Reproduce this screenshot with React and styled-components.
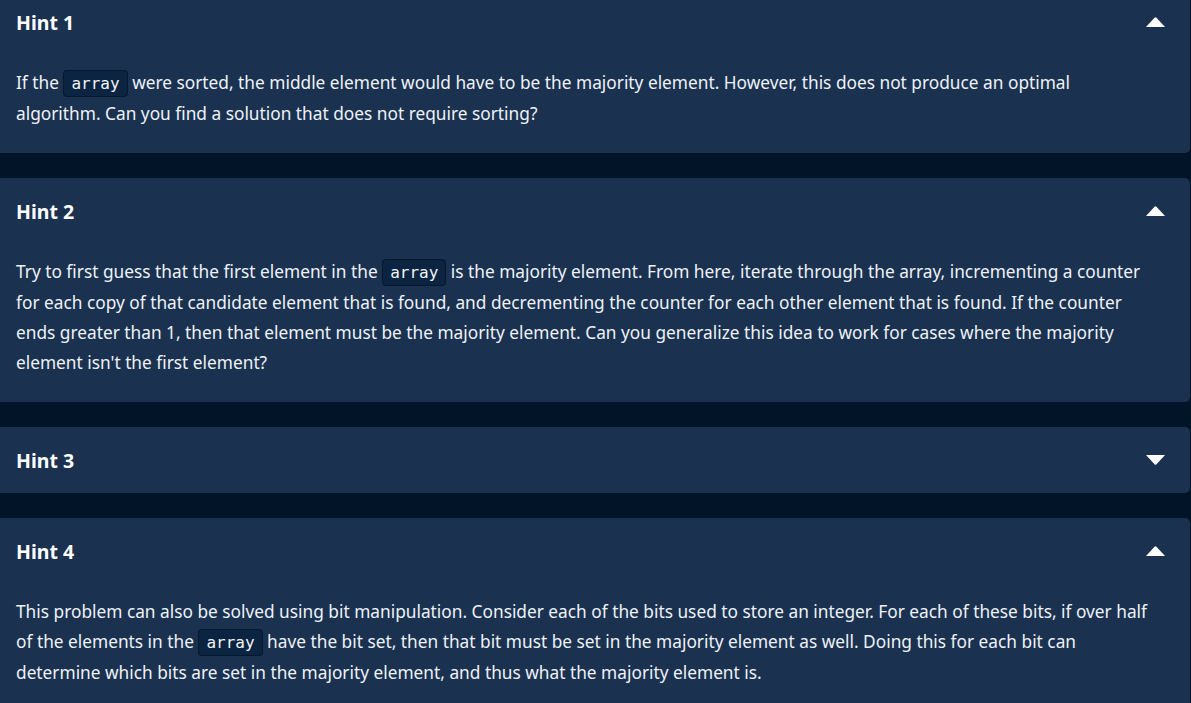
import React from "react";
import styled, { createGlobalStyle } from "styled-components";

const Global = createGlobalStyle`
  html, body { margin: 0; padding: 0; background: #011428; }
  body { font-family: "Noto Sans", "Open Sans", sans-serif; overflow: hidden; }
`;

const Page = styled.div`
  display: flex;
  flex-direction: column;
  gap: 25px;
  margin-top: -11px;
  width: 1190px;
`;

const Card = styled.section`
  background: #1a3150;
  border-radius: 0 5px 5px 0;
  color: #eef2f7;
`;

const Header = styled.div`
  height: 66px;
  display: flex;
  align-items: center;
  justify-content: space-between;
  padding: 0 25px 0 16px;
  box-sizing: border-box;
`;

const Title = styled.h3`
  margin: 0;
  font-size: 19.5px;
  font-weight: 700;
  color: #ffffff;
`;

const Chevron = styled.svg`
  width: 19px;
  height: 10px;
  display: block;
`;

const Body = styled.p`
  margin: 0;
  padding: 13px 36px 25px 16px;
  font-size: 17.3px;
  line-height: 29.7px;
  color: #eef2f7;
`;

const Code = styled.code`
  font-family: "DejaVu Sans Mono", "Liberation Mono", monospace;
  font-size: 16px;
  background: #0b2441;
  border: 1px solid #06182d;
  border-radius: 4px;
  padding: 3px 7px;
  margin: 0;
  color: #f2f5f9;
`;

const Arrow = ({ up }) => (
  <Chevron viewBox="0 0 19 10">
    {up ? (
      <path d="M0 10 L8.5 0.8 Q9.5 -0.2 10.5 0.8 L19 10 Z" fill="#fff" />
    ) : (
      <path d="M0 0 L19 0 L10.5 9.2 Q9.5 10.2 8.5 9.2 Z" fill="#fff" />
    )}
  </Chevron>
);

const Hint = ({ title, open, children }) => (
  <Card>
    <Header>
      <Title>{title}</Title>
      <Arrow up={open} />
    </Header>
    {open && <Body>{children}</Body>}
  </Card>
);

export default function App() {
  return (
    <>
      <Global />
      <Page>
        <Hint title="Hint 1" open>
          If the <Code>array</Code> were sorted, the middle element would have to be the majority
          element. However, this does not produce an optimal algorithm. Can you find a solution that
          does not require sorting?
        </Hint>
        <Hint title="Hint 2" open>
          Try to first guess that the first element in the <Code>array</Code> is the majority
          element. From here, iterate through the array, incrementing a counter for each copy of that
          candidate element that is found, and decrementing the counter for each other element that is
          found. If the counter ends greater than 1, then that element must be the majority element.
          Can you generalize this idea to work for cases where the majority element isn't the first
          element?
        </Hint>
        <Hint title="Hint 3" />
        <Hint title="Hint 4" open>
          This problem can also be solved using bit manipulation. Consider each of the bits used to
          store an integer. For each of these bits, if over half of the elements in the{" "}
          <Code>array</Code> have the bit set, then that bit must be set in the majority element as
          well. Doing this for each bit can determine which bits are set in the majority element, and
          thus what the majority element is.
        </Hint>
      </Page>
    </>
  );
}
